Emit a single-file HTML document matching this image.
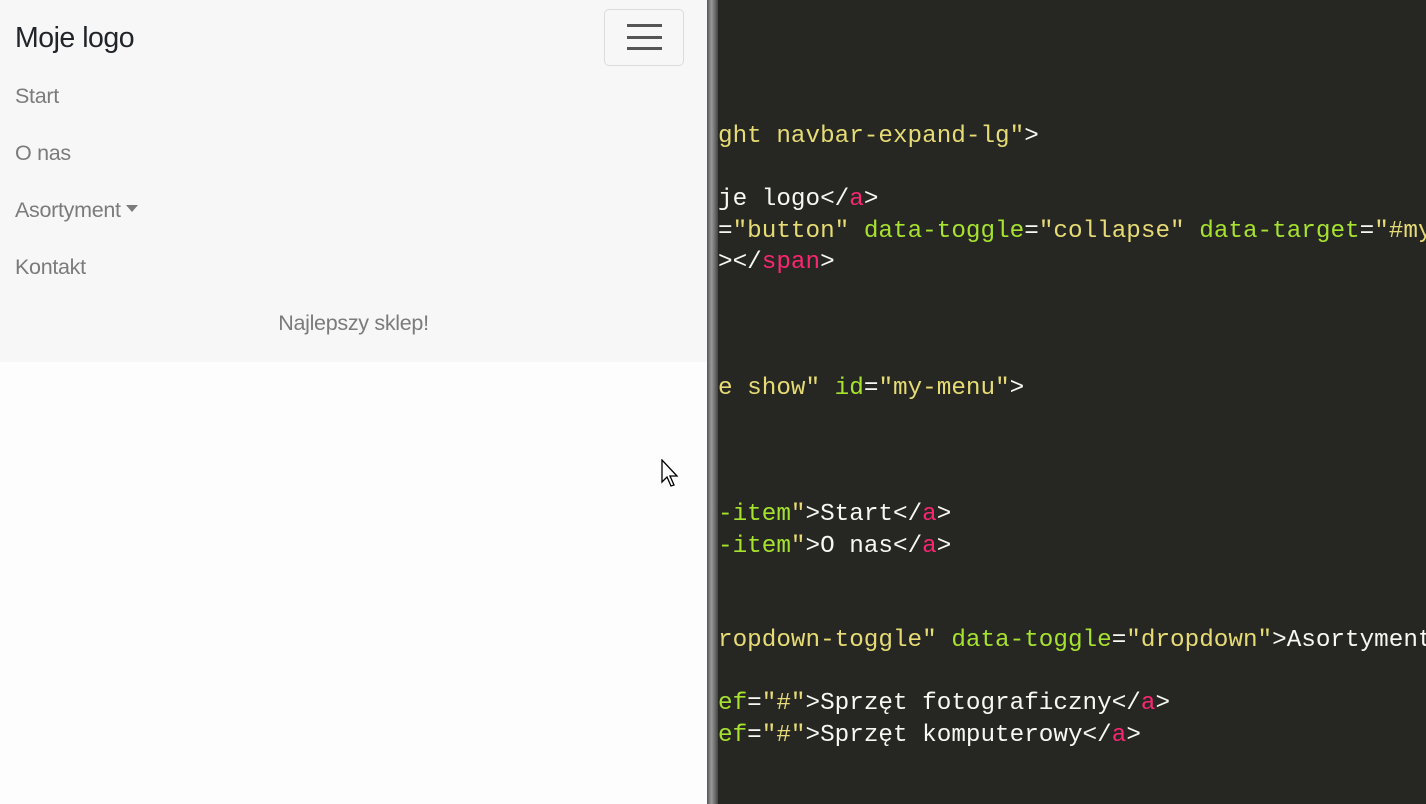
<!DOCTYPE html>
<html><head><meta charset="utf-8"><style>
html,body{margin:0;padding:0;width:1426px;height:804px;overflow:hidden;background:#fdfdfd;font-family:"Liberation Sans",sans-serif}
#left{position:absolute;left:0;top:0;width:707px;height:804px;background:#fdfdfd}
#nav{position:absolute;left:0;top:0;width:707px;height:362px;background:#f7f7f8}
.brand{position:absolute;left:15px;top:22px;font-size:28.5px;color:#212529;letter-spacing:-0.5px}
.lnk{position:absolute;left:15px;font-size:21.5px;color:#7b7b7b;letter-spacing:-0.3px}
.tag{position:absolute;left:0;width:707px;top:311px;text-align:center;font-size:21.5px;color:#7b7b7b;letter-spacing:-0.3px}
.tog{position:absolute;left:604px;top:9px;width:78px;height:55px;border:1px solid #dcdcdc;border-radius:5px}
.tog i{position:absolute;left:22px;width:35px;height:3px;background:#555}
.caret{display:inline-block;width:0;height:0;border-left:6px solid transparent;border-right:6px solid transparent;border-top:7px solid #7b7b7b;vertical-align:5px;margin-left:5px}
#div{position:absolute;left:707px;top:0;width:11px;height:804px;background:linear-gradient(90deg,#555,#9a9a9a 40%,#444)}
#code{position:absolute;left:718px;top:0;width:708px;height:804px;background:#262722;overflow:hidden}
pre{position:absolute;left:0;top:121px;margin:0;font-family:"Liberation Mono",monospace;font-size:24.3px;line-height:31.5px;color:#f8f8f2}
.y{color:#e6db74}.g{color:#a6e22e}.p{color:#f92672}
</style></head><body>
<div id="left"><div id="nav">
<div class="brand">Moje logo</div>
<div class="tog"><i style="top:14px"></i><i style="top:26px"></i><i style="top:37px"></i></div>
<div class="lnk" style="top:84px">Start</div>
<div class="lnk" style="top:141px">O nas</div>
<div class="lnk" style="top:198px">Asortyment<span class="caret"></span></div>
<div class="lnk" style="top:255px">Kontakt</div>
<div class="tag">Najlepszy sklep!</div>
</div>
<svg style="position:absolute;left:661px;top:459px" width="20" height="30" viewBox="0 0 20 30"><path d="M1 1 L1 23 L6 18 L10 27 L13 26 L9 17 L16 17 Z" fill="#fff" stroke="#000" stroke-width="1.3"/></svg>
</div>
<div id="div"></div>
<div id="code"><pre><span class="y">ght navbar-expand-lg"</span>&gt;

je logo&lt;/<span class="p">a</span>&gt;
=<span class="y">"button"</span> <span class="g">data-toggle</span>=<span class="y">"collapse"</span> <span class="g">data-target</span>=<span class="y">"#my-menu"</span>
&gt;&lt;/<span class="p">span</span>&gt;



<span class="y">e show"</span> <span class="g">id</span>=<span class="y">"my-menu"</span>&gt;



<span class="g">-item</span><span class="y">"</span>&gt;Start&lt;/<span class="p">a</span>&gt;
<span class="g">-item</span><span class="y">"</span>&gt;O nas&lt;/<span class="p">a</span>&gt;


<span class="y">ropdown-toggle"</span> <span class="g">data-toggle</span>=<span class="y">"dropdown"</span>&gt;Asortyment

<span class="g">ef</span>=<span class="y">"#"</span>&gt;Sprzęt fotograficzny&lt;/<span class="p">a</span>&gt;
<span class="g">ef</span>=<span class="y">"#"</span>&gt;Sprzęt komputerowy&lt;/<span class="p">a</span>&gt;
</pre></div>
</body></html>
